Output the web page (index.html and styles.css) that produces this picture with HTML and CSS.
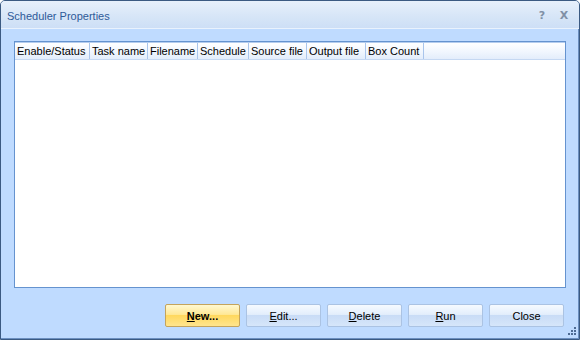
FILE: index.html
```html
<!DOCTYPE html>
<html lang="en">
  <head>
    <meta charset="UTF-8" />
    <title>Scheduler Properties</title>
    <link rel="stylesheet" href="styles.css">
  </head>
  <body>
    <div class="window">
      <div class="titlebar">
        <span class="title">Scheduler Properties</span>
        <span class="tb-btn">?</span>
        <span class="tb-btn close-x">X</span>
      </div>

      <div class="content">
        <div class="listview">
          <div class="lv-header">
            <div class="col" style="width: 75px">Enable/Status</div>
            <div class="col" style="width: 58px">Task name</div>
            <div class="col" style="width: 50px">Filename</div>
            <div class="col" style="width: 51px">Schedule</div>
            <div class="col" style="width: 58px">Source file</div>
            <div class="col" style="width: 59px">Output file</div>
            <div class="col" style="width: 58px">Box Count</div>
          </div>
        </div>

        <div class="buttons">
          <button class="btn btn-default"><u>N</u>ew...</button>
          <button class="btn"><u>E</u>dit...</button>
          <button class="btn"><u>D</u>elete</button>
          <button class="btn"><u>R</u>un</button>
          <button class="btn">Close</button>
        </div>
      </div>

      <svg class="grip" width="8" height="8" viewBox="0 0 8 8">
        <rect x="6" y="0" width="2" height="2" fill="#4d6b94" />
        <rect x="3" y="3" width="2" height="2" fill="#4d6b94" />
        <rect x="6" y="3" width="2" height="2" fill="#4d6b94" />
        <rect x="0" y="6" width="2" height="2" fill="#4d6b94" />
        <rect x="3" y="6" width="2" height="2" fill="#4d6b94" />
        <rect x="6" y="6" width="2" height="2" fill="#4d6b94" />
      </svg>
    </div>
  </body>
</html>
```

FILE: styles.css
```css
* {
  box-sizing: border-box;
  margin: 0;
  padding: 0;
}

body {
  font-family: "Liberation Sans", Arial, sans-serif;
  font-size: 11px;
  background-color: #ffffff;
}

.window {
  position: relative;
  width: 580px;
  height: 340px;
  border: 1px solid #3b5a82;
  border-radius: 5px 5px 0 0;
  background-color: #bfdbff;
  display: flex;
  flex-direction: column;
  box-shadow: inset -1px -1px 0 #6b8fc0;
}

.titlebar {
  height: 28px;
  display: flex;
  align-items: center;
  padding: 0 4px 0 6px;
  border-radius: 4px 4px 0 0;
  background: linear-gradient(#e7f0fb, #d6e5f7 60%, #cddff6);
  border-bottom: 1px solid #e9f2fd;
}

.title {
  flex: 1;
  color: #2e5a98;
  font-size: 11px;
  padding-top: 3px;
}

.tb-btn {
  color: #8090a6;
  font-family: "DejaVu Sans", sans-serif;
  font-weight: bold;
  font-size: 11px;
  width: 22px;
  text-align: center;
  margin-top: 2px;
}

.content {
  flex: 1;
  display: flex;
  flex-direction: column;
  padding: 12px 13px 11px 13px;
}

.listview {
  height: 247px;
  border: 1px solid #6593cf;
  background-color: #ffffff;
}

.lv-header {
  display: flex;
  height: 18px;
  background: linear-gradient(#ffffff, #f2f7fe 50%, #e3edfb);
  border-bottom: 1px solid #c5d8f2;
  border-top: 1px solid #b5cdee;
}

.col {
  padding-left: 2px;
  line-height: 16px;
  color: #000000;
  white-space: nowrap;
  overflow: hidden;
  border-right: 1px solid #a9c5ec;
}

.buttons {
  display: flex;
  justify-content: flex-end;
  gap: 6px;
  margin-top: 16px;
  padding-right: 2px;
}

.btn {
  width: 75px;
  height: 23px;
  font-family: "Liberation Sans", Arial, sans-serif;
  font-size: 11px;
  color: #000000;
  border: 1px solid #abc3e3;
  border-radius: 2px;
  background: linear-gradient(#f6faff, #e3eefc 45%, #c9dcf6 50%, #d6e6fa);
  cursor: pointer;
}

.btn-default {
  font-weight: bold;
  border-color: #c4a45c;
  background: linear-gradient(#fff8d0, #ffe896 45%, #ffd85e 50%, #ffe58e);
}

.grip {
  position: absolute;
  right: 3px;
  bottom: 4px;
}
```
